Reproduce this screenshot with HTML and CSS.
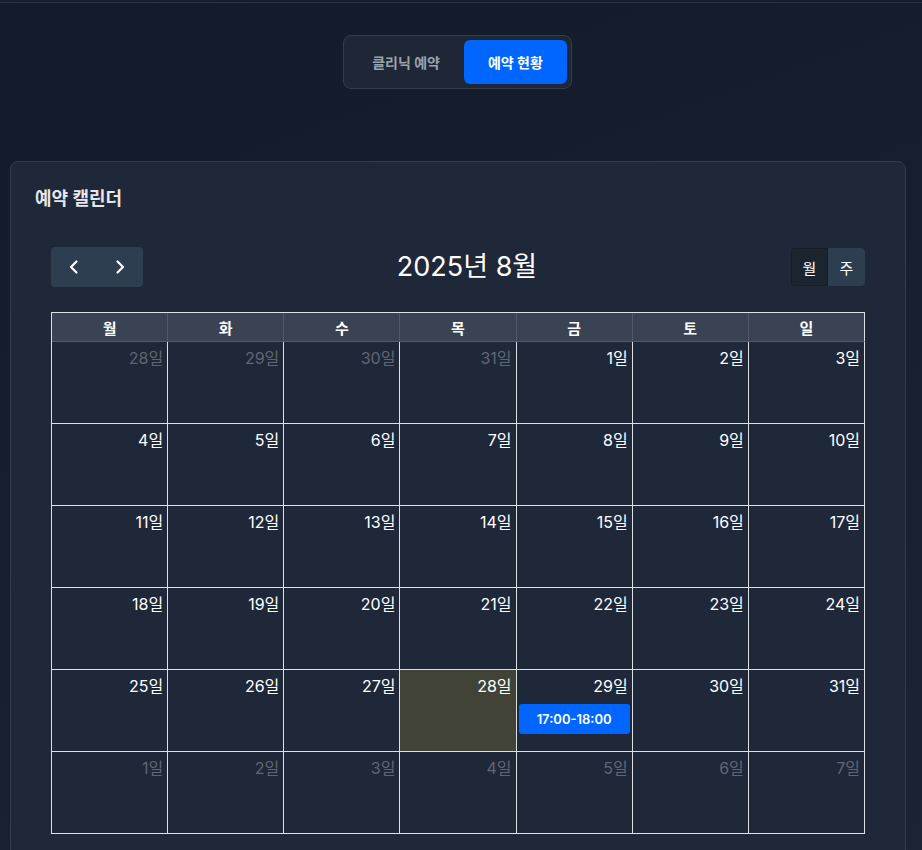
FILE: index.html
```html
<!DOCTYPE html>
<html lang="ko">
<head>
<meta charset="utf-8">
<title>예약 현황</title>
<link rel="stylesheet" href="styles.css">
</head>
<body>
<div class="topbar"></div>
<div class="tabs-wrap">
  <div class="tabs">
    <button class="tab">클리닉 예약</button>
    <button class="tab active">예약 현황</button>
  </div>
</div>
<section class="card">
  <h2 class="card-title">예약 캘린더</h2>
  <div class="calendar">
    <div class="toolbar">
      <div class="btn-group">
        <button class="btn nav" aria-label="이전"><svg width="12" height="16" viewBox="0 0 12 16"><path d="M8.5 2.5 L3 8 L8.5 13.5" fill="none" stroke="#fff" stroke-width="2.2" stroke-linecap="round" stroke-linejoin="round"/></svg></button>
        <button class="btn nav" aria-label="다음"><svg width="12" height="16" viewBox="0 0 12 16"><path d="M3.5 2.5 L9 8 L3.5 13.5" fill="none" stroke="#fff" stroke-width="2.2" stroke-linecap="round" stroke-linejoin="round"/></svg></button>
      </div>
      <h1 class="title">2025년 8월</h1>
      <div class="btn-group">
        <button class="btn view active">월</button>
        <button class="btn view">주</button>
      </div>
    </div>
    <table class="grid">
      <thead>
        <tr><th>월</th><th>화</th><th>수</th><th>목</th><th>금</th><th>토</th><th>일</th></tr>
      </thead>
      <tbody>
        <tr>
          <td class="other"><div class="num">28일</div></td>
          <td class="other"><div class="num">29일</div></td>
          <td class="other"><div class="num">30일</div></td>
          <td class="other"><div class="num">31일</div></td>
          <td><div class="num">1일</div></td>
          <td><div class="num">2일</div></td>
          <td><div class="num">3일</div></td>
        </tr>
        <tr>
          <td><div class="num">4일</div></td>
          <td><div class="num">5일</div></td>
          <td><div class="num">6일</div></td>
          <td><div class="num">7일</div></td>
          <td><div class="num">8일</div></td>
          <td><div class="num">9일</div></td>
          <td><div class="num">10일</div></td>
        </tr>
        <tr>
          <td><div class="num">11일</div></td>
          <td><div class="num">12일</div></td>
          <td><div class="num">13일</div></td>
          <td><div class="num">14일</div></td>
          <td><div class="num">15일</div></td>
          <td><div class="num">16일</div></td>
          <td><div class="num">17일</div></td>
        </tr>
        <tr>
          <td><div class="num">18일</div></td>
          <td><div class="num">19일</div></td>
          <td><div class="num">20일</div></td>
          <td><div class="num">21일</div></td>
          <td><div class="num">22일</div></td>
          <td><div class="num">23일</div></td>
          <td><div class="num">24일</div></td>
        </tr>
        <tr>
          <td><div class="num">25일</div></td>
          <td><div class="num">26일</div></td>
          <td><div class="num">27일</div></td>
          <td class="today"><div class="num">28일</div></td>
          <td><div class="num">29일</div><div class="event">17:00-18:00</div></td>
          <td><div class="num">30일</div></td>
          <td><div class="num">31일</div></td>
        </tr>
        <tr>
          <td class="other"><div class="num">1일</div></td>
          <td class="other"><div class="num">2일</div></td>
          <td class="other"><div class="num">3일</div></td>
          <td class="other"><div class="num">4일</div></td>
          <td class="other"><div class="num">5일</div></td>
          <td class="other"><div class="num">6일</div></td>
          <td class="other"><div class="num">7일</div></td>
        </tr>
      </tbody>
    </table>
  </div>
</section>
</body>
</html>
```

FILE: styles.css
```css
* { box-sizing: border-box; }
html, body { margin: 0; height: 850px; overflow: hidden; }
body {
  font-family: "Inter", "Noto Sans CJK KR", sans-serif;
  background: linear-gradient(160deg, #131a2a 0%, #171e2f 45%, #1b2334 100%);
  color: #fff;
}
.topbar {
  height: 3px;
  background: #151c2b;
  border-bottom: 1px solid #2b3445;
}
.tabs-wrap {
  display: flex;
  justify-content: center;
  margin-top: 32px;
  padding-right: 7px;
}
.tabs {
  display: flex;
  padding: 4px;
  background: #1f2736;
  border: 1px solid #343d4d;
  border-radius: 8px;
}
.tab {
  height: 44px;
  padding: 0 24px;
  border: 0;
  border-radius: 6px;
  background: transparent;
  color: #9ca3af;
  font-family: inherit;
  font-size: 14px;
  font-weight: 700;
}
.tab.active {
  background: #0066ff;
  color: #fff;
}
.card {
  margin: 72px 0 0 10px;
  width: 896px;
  height: 700px;
  background: #1f2839;
  border: 1px solid #323b4c;
  border-radius: 8px;
  padding: 24px 24px 0 24px;
}
.card-title {
  margin: 0 0 19px 0;
  font-size: 18px;
  line-height: 26px;
  font-weight: 700;
  color: #e5e7eb;
}
.calendar {
  padding: 16px 16px 0 16px;
}
.toolbar {
  display: flex;
  justify-content: space-between;
  align-items: center;
  margin-bottom: 25px;
}
.title {
  margin: 0;
  font-size: 27px;
  font-weight: 400;
  line-height: 40px;
  color: #fff;
}
.btn-group { display: flex; }
.btn {
  border: 0;
  background: #2c3e50;
  color: #fff;
  font-family: inherit;
  display: flex;
  align-items: center;
  justify-content: center;
}
.btn.nav {
  width: 46px;
  height: 40px;
}
.btn-group .btn:first-child { border-radius: 4px 0 0 4px; }
.btn-group .btn:last-child { border-radius: 0 4px 4px 0; }
.btn.view {
  width: 37px;
  height: 38px;
  font-size: 15px;
}
.btn.view.active {
  background: #1a252f;
  box-shadow: inset 0 0 0 1px #151e27;
}
.grid {
  width: 100%;
  table-layout: fixed;
  border-collapse: separate;
  border-spacing: 0;
  border-left: 1px solid #dcdfe4;
  border-top: 1px solid #dcdfe4;
}
.grid th {
  height: 29px;
  padding: 0;
  background: #3a4354;
  font-size: 15px;
  font-weight: 700;
  color: #fff;
  border-right: 1px solid #505a6b;
  border-bottom: 1px solid #505a6b;
}
.grid th:last-child { border-right-color: #dcdfe4; }
.grid td {
  height: 82px;
  padding: 0;
  vertical-align: top;
  border-right: 1px solid #dcdfe4;
  border-bottom: 1px solid #dcdfe4;
}
.num {
  text-align: right;
  padding: 4px 4px 0 0;
  font-size: 16px;
  line-height: 24px;
  color: #fff;
}
.other .num { color: #5e6673; }
.today { background: #404336; }
.event {
  margin: 6px 2px 0 2px;
  height: 30px;
  line-height: 30px;
  background: #0066ff;
  border-radius: 3px;
  text-align: center;
  font-size: 13px;
  font-weight: 600;
  color: #fff;
}
```
